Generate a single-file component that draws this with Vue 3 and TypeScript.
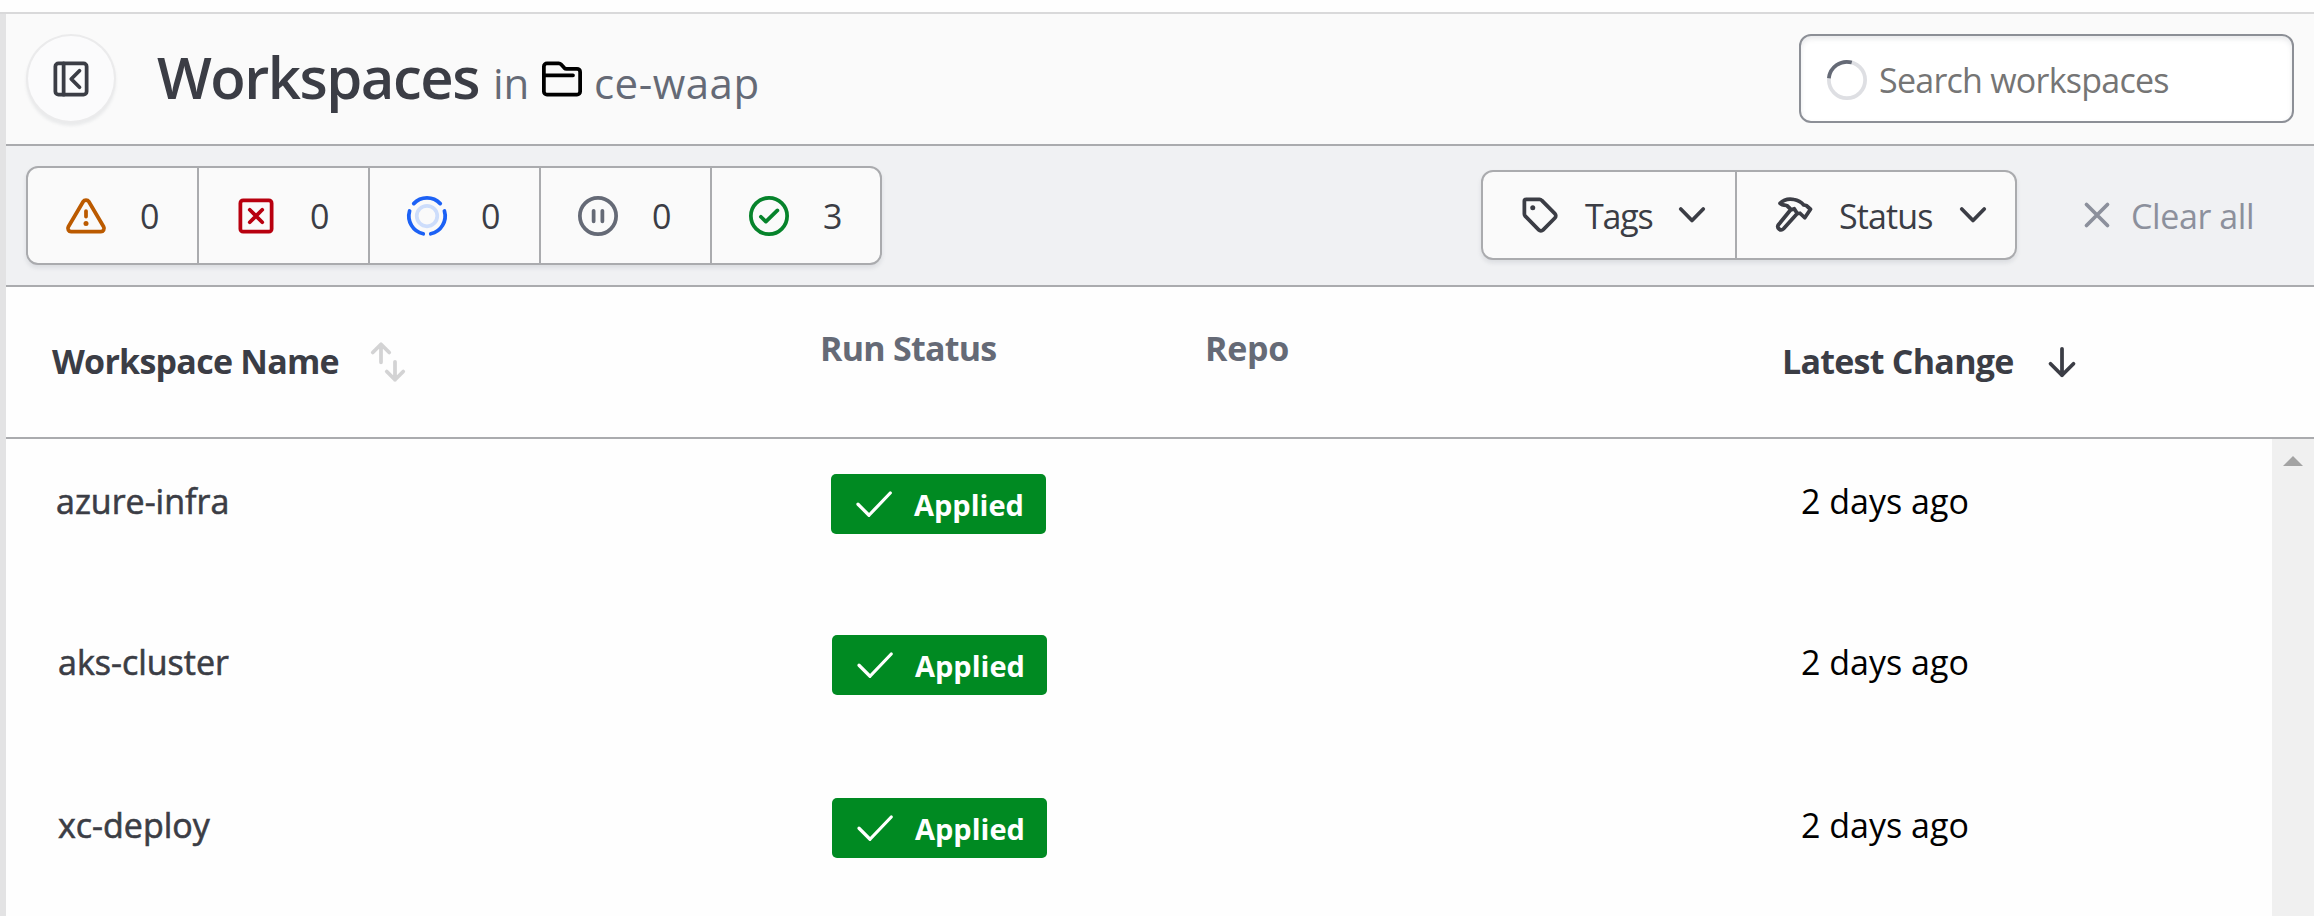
<script setup lang="ts">
interface Stat {
  kind: 'warning' | 'error' | 'running' | 'paused' | 'success'
  count: number
}
interface Workspace {
  name: string
  status: string
  changed: string
}

const stats: Stat[] = [
  { kind: 'warning', count: 0 },
  { kind: 'error', count: 0 },
  { kind: 'running', count: 0 },
  { kind: 'paused', count: 0 },
  { kind: 'success', count: 3 },
]
const workspaces: Workspace[] = [
  { name: 'azure-infra', status: 'Applied', changed: '2 days ago' },
  { name: 'aks-cluster', status: 'Applied', changed: '2 days ago' },
  { name: 'xc-deploy', status: 'Applied', changed: '2 days ago' },
]
</script>

<template>
  <div class="page">
    <aside class="rail"></aside>
    <main class="main">
      <header class="header">
        <button class="round" aria-label="Collapse">
          <svg class="icon" viewBox="0 0 16 16">
            <rect x="1.75" y="1.75" width="12.5" height="12.5" rx="1.25" />
            <path d="M5.05 1.75v12.5M11.4 4.7L8.1 8l3.3 3.3" />
          </svg>
        </button>
        <div class="heading">
          <h1 class="title">Workspaces</h1>
          <span class="sub in">in</span>
          <svg class="icon folder" viewBox="0 0 16 16">
            <path d="M.75 3A1.25 1.25 0 0 1 2 1.75h4.7c.33 0 .65.13.88.37l1.3 1.4c.24.24.55.38.9.38H14a1.25 1.25 0 0 1 1.25 1.25V13A1.25 1.25 0 0 1 14 14.25H2A1.25 1.25 0 0 1 .75 13zM1.2 6.5h11.2" />
          </svg>
          <span class="sub project">ce-waap</span>
        </div>
        <div class="search">
          <svg class="icon" viewBox="0 0 16 16">
            <circle cx="8" cy="8" r="7.25" class="track" />
            <path class="arc" d="M.75 7.3A7.25 7.25 0 0 1 9.9 1" />
          </svg>
          <span class="placeholder">Search workspaces</span>
        </div>
      </header>

      <section class="filters">
        <div class="stats">
          <div v-for="s in stats" :key="s.kind" class="stat">
            <svg class="icon" :class="s.kind" viewBox="0 0 16 16">
              <template v-if="s.kind === 'warning'">
                <path d="M8 1.6c.45 0 .87.24 1.1.63l5.95 10.1a1.27 1.27 0 0 1-1.1 1.92H2.05a1.27 1.27 0 0 1-1.1-1.92L6.9 2.23c.23-.39.65-.63 1.1-.63zM8 6v2.2" />
                <circle cx="8" cy="11" r="1" class="dot" />
              </template>
              <template v-else-if="s.kind === 'error'">
                <rect x="1.75" y="1.75" width="12.5" height="12.5" rx="1.1" />
                <path d="M5.5 5.5l5 5M10.5 5.5l-5 5" />
              </template>
              <template v-else-if="s.kind === 'running'">
                <circle cx="8" cy="8" r="4.1" class="core" />
                <path d="M2.7 3.05a7.25 7.25 0 0 1 10.6 0M14.97 6a7.25 7.25 0 0 1-5.47 9.1M1.03 6a7.25 7.25 0 0 0 5.47 9.1" />
              </template>
              <template v-else-if="s.kind === 'paused'">
                <circle cx="8" cy="8" r="7.25" />
                <path d="M6.25 5.9v4.2M9.75 5.9v4.2" />
              </template>
              <template v-else>
                <circle cx="8" cy="8" r="7.25" />
                <path d="M4.75 8.3l2 1.95 4.6-4.5" />
              </template>
            </svg>
            <span class="count">{{ s.count }}</span>
          </div>
        </div>

        <div class="dropdowns">
          <button class="drop tags">
            <svg class="icon" viewBox="0 0 16 16">
              <path d="M1.75 2.4c0-.36.29-.65.65-.65h5.4c.35 0 .67.14.9.4l5.25 5.3c.48.5.48 1.27 0 1.76l-4.7 4.75c-.5.48-1.28.48-1.76 0L2.1 8.45a1.2 1.2 0 0 1-.35-.88z" />
              <circle cx="5.1" cy="5.1" r="1" class="dot" />
            </svg>
            <span class="label">Tags</span>
            <svg class="icon chevron" viewBox="0 0 16 16"><path d="M3.5 5.6L8 10.2l4.5-4.6" /></svg>
          </button>
          <button class="drop status">
            <svg class="icon" viewBox="0 0 16 16">
              <path d="M2.4 3.3C3.9 1.8 6 1.4 8 1.8c1.7.3 3 1.2 3.9 2.2l1 .2 1.7 1.5-2.3 3.4-1.9-1.8-1.1.1-5.5 6.1c-1.1 1.1-2.8-.2-2.1-1.5l4.8-5.9-.1-.7-1.3-1.2c-1.100-.1-2.200-.3-2.700-.9zM6.400 6.100l1.700-.6 1.200 1.900" />
            </svg>
            <span class="label">Status</span>
            <svg class="icon chevron" viewBox="0 0 16 16"><path d="M3.5 5.6L8 10.2l4.5-4.6" /></svg>
          </button>
        </div>

        <button class="clear">
          <svg class="icon" viewBox="0 0 16 16"><path d="M3.8 3.8l8.4 8.4M12.2 3.8l-8.4 8.4" /></svg>
          <span class="clear-label">Clear all</span>
        </button>
      </section>

      <div class="thead">
        <div class="th sortable">
          <span class="th-name">Workspace Name</span>
          <svg class="icon sort" viewBox="0 0 16 16">
            <path d="M5.2 8.1V.9M1.9 4.2L5.2.9l3.3 3.3M10.8 7.9v7.2M7.5 11.8l3.3 3.3 3.3-3.3" />
          </svg>
        </div>
        <div class="th muted"><span class="th-run">Run Status</span></div>
        <div class="th muted"><span class="th-repo">Repo</span></div>
        <div class="th sortable">
          <span class="th-change">Latest Change</span>
          <svg class="icon down" viewBox="0 0 16 16"><path d="M8 2.7v10.6M3.4 8.7L8 13.3l4.6-4.6" /></svg>
        </div>
      </div>

      <div class="body">
        <div class="rows">
          <div v-for="w in workspaces" :key="w.name" class="row">
            <div class="name">{{ w.name }}</div>
            <div class="badge">
              <svg class="icon" viewBox="0 0 16 16"><path d="M1.6 8.1L6 12.5l8.5-8.9" /></svg>
              <span class="badge-text">{{ w.status }}</span>
            </div>
            <div class="changed">{{ w.changed }}</div>
          </div>
        </div>
        <div class="scrollbar">
          <svg class="thumb-up" viewBox="0 0 20 10"><path d="M10 0l10 10H0z" /></svg>
        </div>
      </div>
    </main>
  </div>
</template>

<style>
body {
  background: #fefefe;
  overflow: hidden;
}
</style>

<style scoped>
.page {
  box-sizing: border-box;
  width: 2320px;
  height: 916px;
  padding: 12px 6px 0 0;
  display: flex;
  overflow: hidden;
  font-family: 'Open Sans', 'Noto Sans', sans-serif;
  font-size: 34px;
  line-height: 46px;
  color: #3b3d45;
  white-space: nowrap;
}
.page * {
  box-sizing: border-box;
}
button {
  font: inherit;
  color: inherit;
  padding: 0;
  margin: 0;
}
.rail {
  width: 6px;
  background: #e3e3e4;
  border-top: 2px solid #d9d9da;
}
.main {
  width: 2308px;
  display: flex;
  flex-direction: column;
}
.icon {
  width: 40px;
  height: 40px;
  flex: none;
  overflow: visible;
  fill: none;
  stroke: currentColor;
  stroke-width: 1.5;
  stroke-linecap: round;
  stroke-linejoin: round;
}
.dot {
  fill: currentColor;
  stroke: none;
}

.header {
  height: 134px;
  flex: none;
  border-top: 2px solid #d9d9da;
  border-bottom: 2px solid #aaabae;
  background: #fafafa;
  display: flex;
  align-items: flex-start;
  padding: 20px 20px 0 20px;
}
.round {
  width: 90px;
  height: 89px;
  border: 2px solid #ebebec;
  border-radius: 50%;
  background: #fbfbfc;
  box-shadow: 0 3px 3px rgba(101, 106, 118, 0.1);
  display: flex;
  align-items: center;
  justify-content: center;
}
.heading {
  display: flex;
  align-items: baseline;
  margin-left: 41px;
}
.title {
  margin: 0;
  font-size: 58px;
  line-height: 85px;
  font-weight: 600;
  letter-spacing: -1.5px;
  width: 336px;
}
.sub {
  font-size: 42px;
  color: #656a76;
}
.in {
  width: 49px;
}
.folder {
  color: #000;
  align-self: flex-start;
  margin-top: 25px;
}
.project {
  margin-left: 12px;
  letter-spacing: 0.5px;
}
.search {
  margin-left: auto;
  width: 495px;
  height: 89px;
  border: 2px solid #8c8f96;
  border-radius: 12px;
  background: #fff;
  box-shadow: inset 0 3px 5px rgba(101, 106, 118, 0.14);
  display: flex;
  align-items: center;
  padding: 2px 0 0 26px;
}
.track {
  stroke: #dedfe3;
}
.arc {
  stroke: #656a76;
  stroke-linecap: butt;
}
.placeholder {
  margin-left: 12px;
  color: #757575;
  letter-spacing: -0.75px;
}

.filters {
  height: 141px;
  flex: none;
  background: #f0f1f3;
  border-bottom: 2px solid #aaabae;
  display: flex;
  align-items: flex-start;
  padding: 20px 0 0 20px;
}
.stats {
  width: 856px;
  height: 99px;
  border: 2px solid #aaabae;
  border-radius: 12px;
  background: #fafafa;
  box-shadow: 0 3px 4px rgba(101, 106, 118, 0.14);
  display: flex;
}
.stat {
  width: 169px;
  flex: none;
  display: flex;
  align-items: center;
  padding-left: 38px;
}
.stat + .stat {
  width: 171px;
  border-left: 2px solid #aaabae;
  padding-left: 37px;
}
.count {
  margin-left: 34px;
}
.warning { color: #bb5a00; }
.error { color: #b8000f; }
.running { color: #1c61f5; }
.core { stroke: #cdddfb; }
.paused { color: #656a76; }
.success { color: #06832b; }
.dropdowns {
  margin: 4px 0 0 599px;
  width: 536px;
  height: 90px;
  border: 2px solid #aaabae;
  border-radius: 12px;
  background: #fafafa;
  box-shadow: 0 3px 4px rgba(101, 106, 118, 0.14);
  display: flex;
}
.drop {
  border: 0;
  background: none;
  display: flex;
  align-items: center;
}
.tags {
  width: 252px;
  padding-left: 37px;
}
.tags .label {
  width: 87px;
  margin-left: 25px;
  letter-spacing: -1.2px;
}
.status {
  flex: 1;
  border-left: 2px solid #aaabae;
  padding-left: 37px;
}
.status .label {
  width: 114px;
  margin-left: 25px;
  letter-spacing: -0.9px;
}
.label {
  text-align: left;
  padding-top: 2px;
}
.clear {
  margin: 4px 0 0 60px;
  height: 90px;
  border: 0;
  background: none;
  color: #8c909c;
  display: flex;
  align-items: center;
}
.clear-label {
  margin-left: 14px;
  padding-top: 2px;
  letter-spacing: -0.4px;
}

.thead {
  height: 152px;
  flex: none;
  background: #fefefe;
  border-bottom: 2px solid #aaabae;
  display: grid;
  grid-template-columns: 768px 385px 577px 1fr;
  padding: 38px 0 0 46px;
  font-weight: 700;
  letter-spacing: -0.75px;
}
.th {
  display: flex;
  align-items: flex-start;
}
.sortable {
  padding-top: 13px;
}
.muted {
  color: #656a76;
}
.th-name {
  width: 316px;
}
.th-repo {
  letter-spacing: -0.3px;
}
.th-change {
  width: 260px;
}
.sort {
  color: #d3d3d4;
  margin-top: 4px;
}
.down {
  margin-top: 4px;
}

.body {
  flex: 1;
  display: flex;
  background: #fefefe;
}
.rows {
  width: 2266px;
}
.row {
  height: 163px;
  display: grid;
  grid-template-columns: 774px 969px 1fr;
  padding: 35px 0 0 52px;
  align-items: start;
}
.row:first-child {
  height: 161px;
  grid-template-columns: 775px 970px 1fr;
  padding-left: 50px;
}
.name {
  margin-top: 4px;
  -webkit-text-stroke: 0.6px currentColor;
}
.badge {
  width: 215px;
  height: 60px;
  border-radius: 5px;
  background: #008a22;
  color: #fff;
  display: flex;
  align-items: center;
  padding: 0 0 1px 23px;
}
.badge .icon {
  stroke-width: 1.3;
}
.badge-text {
  margin: 3px 0 0 20px;
  font-size: 29px;
  font-weight: 700;
}
.changed {
  margin-top: 4px;
  color: #000;
}
.scrollbar {
  width: 42px;
  background: #f0f0f0;
  display: flex;
  justify-content: center;
  padding-top: 17px;
}
.thumb-up {
  width: 20px;
  height: 10px;
  fill: #a3a3a3;
}
</style>
